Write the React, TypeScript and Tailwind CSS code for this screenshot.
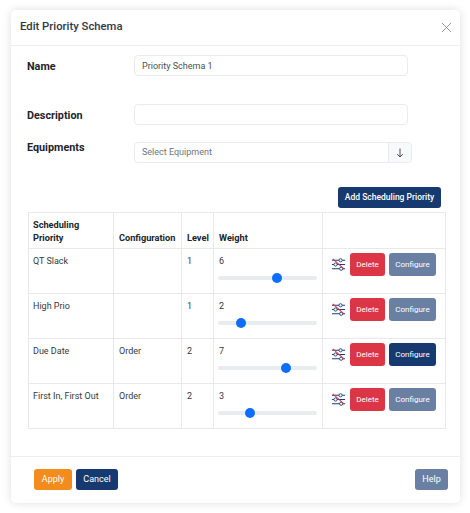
import React from 'react';
import {X} from 'lucide-react';

const rows = [
  {name: 'QT Slack', config: '', level: 1, weight: 6, canConfigure: false},
  {name: 'High Prio', config: '', level: 1, weight: 2, canConfigure: false},
  {name: 'Due Date', config: 'Order', level: 2, weight: 7, canConfigure: true},
  {name: 'First In, First Out', config: 'Order', level: 2, weight: 3, canConfigure: false},
];

// sliders with a red strike through them
const FilterOffIcon = () => (
  <svg width="15" height="15" viewBox="0 0 16 16" fill="none" className="shrink-0">
    <path d="M1 3.5h7.5M12 3.5h3M1 8h2M6.5 8H15M1 12.5h8M12.5 12.5H15" stroke="#1f3f73" strokeWidth="1.1" />
    <circle cx="10.2" cy="3.5" r="1.7" stroke="#1f3f73" strokeWidth="1" />
    <circle cx="4.8" cy="8" r="1.7" stroke="#1f3f73" strokeWidth="1" />
    <circle cx="10.8" cy="12.5" r="1.7" stroke="#1f3f73" strokeWidth="1" />
    <path d="M2 2l12 11" stroke="#e0374a" strokeWidth="1.1" />
  </svg>
);

const Weight = ({value}: {value: number}) => (
  <div className="pt-[2px]">
    <div>{value}</div>
    <div className="relative ml-[-1px] mt-[7px] h-[4px] w-[99px] rounded-full bg-[#e9ecef]">
      <div
        className="absolute top-[-3px] h-[10px] w-[10px] rounded-full bg-[#0d6efd]"
        style={{left: value * 9}}
      />
    </div>
  </div>
);

const thClass = 'border border-[#e6e8ea] px-[5px] pb-[4px] pt-[5px] align-bottom text-left text-[9.2px] font-bold text-[#212529]';
const tdClass = 'border border-[#e6e8ea] px-[5px] pt-[4px] align-top';

export default function App() {
  return (
    <div className="h-[513px] w-[470px] bg-white pl-[11px] pt-[10px] font-['Roboto',sans-serif] text-[#212529]">
      <div className="flex h-[493px] w-[449px] flex-col rounded-[5px] bg-white shadow-[0_0_10px_rgba(0,0,0,0.13)]">
        <header className="flex h-[36px] shrink-0 items-center justify-between border-b border-[#eceef0] pl-[9px] pr-[5px]">
          <h1 className="text-[11.3px] font-medium text-[#33383d]">Edit Priority Schema</h1>
          <X size={17} strokeWidth={1.3} className="text-[#8b8f93]" />
        </header>

        <main className="flex-1 pl-[16px]">
          <div className="mt-[9px] flex items-center">
            <label className="w-[107px] pt-[3px] text-[10.8px] font-bold">Name</label>
            <input
              readOnly
              value="Priority Schema 1"
              className="h-[21px] w-[274px] rounded-[4px] border border-[#e9ebee] px-[7px] text-[9px] text-[#495057] outline-none"
            />
          </div>
          <div className="mt-[28px] flex items-center">
            <label className="w-[107px] pt-[3px] text-[10.8px] font-bold">Description</label>
            <input
              readOnly
              className="h-[21px] w-[274px] rounded-[4px] border border-[#e9ebee] px-[7px] text-[9px] outline-none"
            />
          </div>
          <div className="mt-[17px] flex items-start">
            <label className="mt-[-1px] w-[107px] text-[10.8px] font-bold leading-[14px]">Equipments</label>
            <div className="flex h-[21px] w-[278px] rounded-[4px] border border-[#e9ebee]">
              <div className="flex flex-1 items-center px-[7px] text-[9px] text-[#6c757d]">Select Equipment</div>
              <div className="flex w-[23px] items-center justify-center rounded-r-[4px] border-l border-[#e9ebee] bg-[#f8f9fa] text-[#495057]">
                <svg width="8" height="10" viewBox="0 0 8 10" fill="none">
                  <path d="M4 0.5v8.5M1.2 6.2L4 9l2.8-2.8" stroke="currentColor" strokeWidth="1" />
                </svg>
              </div>
            </div>
          </div>

          <div className="mt-[24px] flex justify-end pr-[19px]">
            <button className="h-[21px] w-[103px] rounded-[3px] bg-[#163a70] text-[8.5px] font-medium text-white">
              Add Scheduling Priority
            </button>
          </div>

          <table className="ml-[1px] mt-[4px] w-[417px] table-fixed border-collapse text-[9px] text-[#343a40]">
            <colgroup>
              <col className="w-[85px]" />
              <col className="w-[68px]" />
              <col className="w-[32px]" />
              <col className="w-[109px]" />
              <col className="w-[123px]" />
            </colgroup>
            <thead>
              <tr className="h-[35px] leading-[13px]">
                <th className={thClass + ' !pl-[4px]'}>
                  Scheduling
                  <br />
                  Priority
                </th>
                <th className={thClass}>Configuration</th>
                <th className={thClass}>Level</th>
                <th className={thClass}>Weight</th>
                <th className={thClass}></th>
              </tr>
            </thead>
            <tbody>
              {rows.map((row) => (
                <tr key={row.name} className="h-[45px]">
                  <td className={tdClass + ' !pl-[4px] !pt-[6px]'}>{row.name}</td>
                  <td className={tdClass + ' !pt-[6px]'}>{row.config}</td>
                  <td className={tdClass + ' !pt-[6px]'}>{row.level}</td>
                  <td className={tdClass}>
                    <Weight value={row.weight} />
                  </td>
                  <td className={tdClass}>
                    <div className="flex items-center pl-[3px]">
                      <FilterOffIcon />
                      <button className="ml-[4px] h-[23px] w-[35px] rounded-[3px] bg-[#dc3545] text-[8px] text-white">
                        Delete
                      </button>
                      <button
                        className={
                          row.canConfigure
                            ? 'ml-[4px] h-[23px] w-[47px] rounded-[3px] bg-[#163a70] text-[8px] text-white'
                            : 'ml-[4px] h-[23px] w-[47px] rounded-[3px] bg-[#6a80a3] text-[8px] text-white'
                        }>
                        Configure
                      </button>
                    </div>
                  </td>
                </tr>
              ))}
            </tbody>
          </table>
        </main>

        <footer className="flex h-[47px] shrink-0 items-start border-t border-[#eceef0] pl-[23px] pr-[12px] pt-[12px]">
          <button className="h-[21px] w-[38px] rounded-[3px] bg-[#f28c1c] text-[9px] text-white">Apply</button>
          <button className="ml-[4px] h-[21px] w-[42px] rounded-[3px] bg-[#163a70] text-[9px] text-white">Cancel</button>
          <button className="ml-auto h-[21px] w-[33px] rounded-[3px] bg-[#6a80a3] text-[9px] text-white">Help</button>
        </footer>
      </div>
    </div>
  );
}
